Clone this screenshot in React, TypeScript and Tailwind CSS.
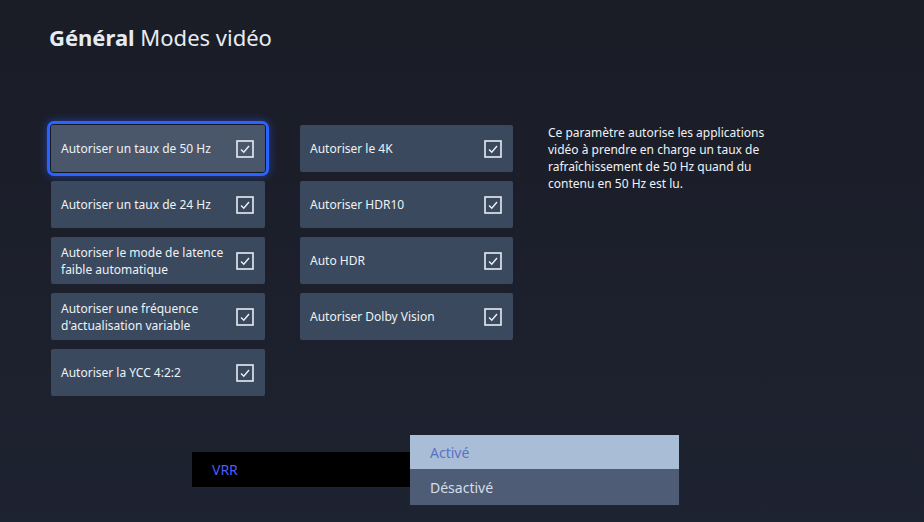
import type { ReactNode } from "react";

const LEFT_ITEMS = [
  "Autoriser un taux de 50 Hz",
  "Autoriser un taux de 24 Hz",
  "Autoriser le mode de latence faible automatique",
  "Autoriser une fréquence d'actualisation variable",
  "Autoriser la YCC 4:2:2",
];

const RIGHT_ITEMS = ["Autoriser le 4K", "Autoriser HDR10", "Auto HDR", "Autoriser Dolby Vision"];

function CheckBox() {
  return (
    <svg width="18" height="18" viewBox="0 0 18 18" className="shrink-0">
      <rect x="1" y="1" width="16" height="16" fill="none" stroke="#e8edf3" strokeWidth="1.6" />
      <polyline points="5,9.5 7.8,12.2 13,6" fill="none" stroke="#e8edf3" strokeWidth="1.5" />
    </svg>
  );
}

function Tile({ label, focused }: { label: string; focused?: boolean }) {
  return (
    <div
      className={
        focused
          ? "rounded-[3px] shadow-[0_0_0_1px_#151824,0_0_0_4px_#2b63ff,0_0_8px_4px_rgba(40,90,255,0.55)]"
          : ""
      }
    >
      <div
        className={`flex h-[47px] items-center justify-between rounded-[2px] pl-[10px] pr-[11px] ${
          focused ? "bg-[#4a5669]" : "bg-[#3a495d]"
        }`}
      >
        <span className="w-[170px] text-[12px] leading-[17px] text-[#eef2f6]">{label}</span>
        <CheckBox />
      </div>
    </div>
  );
}

function Column({ children, className }: { children: ReactNode; className?: string }) {
  return <div className={`flex flex-col gap-[9px] ${className ?? ""}`}>{children}</div>;
}

export default function App() {
  return (
    <div
      className="relative h-[522px] w-[924px] overflow-hidden bg-gradient-to-b from-[#1a1c26] to-[#1e2331] text-white"
      style={{ fontFamily: '"Noto Sans", "Open Sans", sans-serif' }}
    >
      <div className="px-[49px] pt-[22px]">
        <h1 className="text-[22px] leading-[30px] text-[#e6ebf2]">
          <span className="font-bold">Général</span> Modes vidéo
        </h1>

        <div className="mt-[73px] flex items-start pl-[2px]">
          <Column className="w-[214px]">
            {LEFT_ITEMS.map((label, i) => (
              <Tile key={label} label={label} focused={i === 0} />
            ))}
          </Column>

          <Column className="ml-[35px] w-[213px]">
            {RIGHT_ITEMS.map((label) => (
              <Tile key={label} label={label} />
            ))}
          </Column>

          <p className="ml-[35px] -mt-[1px] w-[232px] text-[12px] leading-[17px] text-[#eef2f6]">
            Ce paramètre autorise les applications vidéo à prendre en charge un taux de rafraîchissement de 50 Hz
            quand du contenu en 50 Hz est lu.
          </p>
        </div>
      </div>

      {/* VRR popup */}
      <div className="absolute left-[192px] top-[452px] flex h-[35px] w-[218px] items-center bg-black pl-[20px] text-[14px] text-[#4d5cff]">
        VRR
      </div>
      <div className="absolute left-[410px] top-[435px] flex w-[269px] flex-col text-[14px]">
        <div className="flex h-[34px] items-center bg-[#a9bdd7] pl-[20px] text-[#5a72c4]">Activé</div>
        <div className="flex h-[36px] items-center bg-[#4e5d75] pl-[20px] text-[#d6dde8]">Désactivé</div>
      </div>
    </div>
  );
}
